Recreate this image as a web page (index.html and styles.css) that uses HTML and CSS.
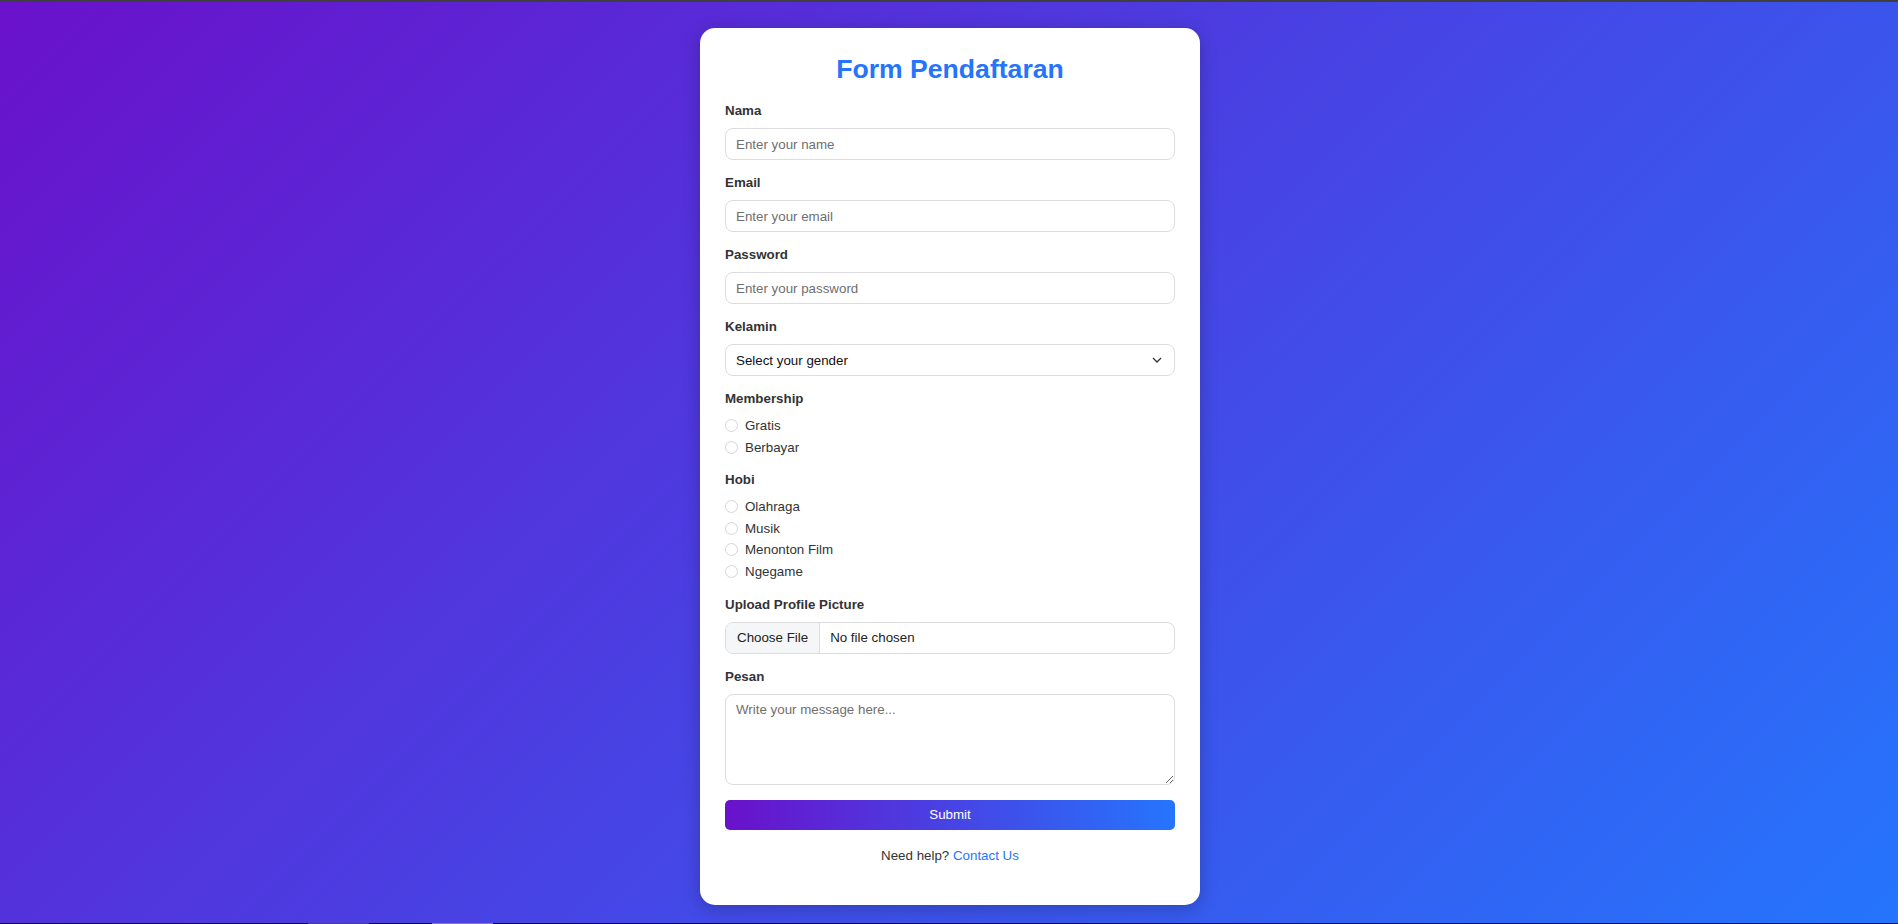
FILE: index.html
```html
<!DOCTYPE html>
<html lang="id">
<head>
<meta charset="utf-8">
<title>Form Pendaftaran</title>
<link rel="stylesheet" href="styles.css">
</head>
<body>
<div class="top-strip"></div>
<main class="page">
  <form class="card">
    <h2 class="title">Form Pendaftaran</h2>

    <div class="group">
      <label class="label" for="nama">Nama</label>
      <input class="field" id="nama" type="text" placeholder="Enter your name">
    </div>

    <div class="group">
      <label class="label" for="email">Email</label>
      <input class="field" id="email" type="email" placeholder="Enter your email">
    </div>

    <div class="group">
      <label class="label" for="password">Password</label>
      <input class="field" id="password" type="password" placeholder="Enter your password">
    </div>

    <div class="group">
      <label class="label" for="kelamin">Kelamin</label>
      <select class="field select" id="kelamin">
        <option>Select your gender</option>
        <option>Laki-laki</option>
        <option>Perempuan</option>
      </select>
    </div>

    <div class="group group-choices">
      <span class="label">Membership</span>
      <div class="choices">
        <label class="choice"><input class="radio" type="radio" name="membership"><span>Gratis</span></label>
        <label class="choice"><input class="radio" type="radio" name="membership"><span>Berbayar</span></label>
      </div>
    </div>

    <div class="group group-choices">
      <span class="label">Hobi</span>
      <div class="choices">
        <label class="choice"><input class="radio" type="checkbox"><span>Olahraga</span></label>
        <label class="choice"><input class="radio" type="checkbox"><span>Musik</span></label>
        <label class="choice"><input class="radio" type="checkbox"><span>Menonton Film</span></label>
        <label class="choice"><input class="radio" type="checkbox"><span>Ngegame</span></label>
      </div>
    </div>

    <div class="group">
      <span class="label">Upload Profile Picture</span>
      <label class="file-field">
        <span class="file-btn">Choose File</span>
        <span class="file-name">No file chosen</span>
        <input class="file-input" type="file">
      </label>
    </div>

    <div class="group">
      <label class="label" for="pesan">Pesan</label>
      <textarea class="field textarea" id="pesan" placeholder="Write your message here..."></textarea>
    </div>

    <button class="submit" type="button">Submit</button>

    <p class="help">Need help? <a class="help-link" href="#">Contact Us</a></p>
  </form>
</main>
<div class="bottom-strip">
  <span class="strip-seg strip-gap1"></span>
  <span class="strip-seg strip-gray"></span>
  <span class="strip-seg strip-gap2"></span>
  <span class="strip-seg strip-orange"></span>
</div>
</body>
</html>
```

FILE: styles.css
```css
* {
  box-sizing: border-box;
}

html, body {
  margin: 0;
  padding: 0;
  height: 924px;
  overflow: hidden;
}

body {
  font-family: "Liberation Sans", Arial, sans-serif;
  font-size: 13.333px;
  color: #333;
  display: flex;
  flex-direction: column;
}

.top-strip {
  height: 2px;
  background: #3f3f3f;
  flex: none;
}

.page {
  flex: 1;
  background: linear-gradient(135deg, #6a11cb 0%, #2575fc 100%);
  display: flex;
  justify-content: center;
  align-items: flex-start;
  padding-top: 26px;
  padding-left: 2px;
}

.card {
  width: 500px;
  background: #fff;
  border-radius: 15px;
  padding: 25px 25px 25px;
  box-shadow: 0 4px 18px rgba(0, 0, 0, 0.22);
}

.title {
  margin: 1px 0 19px;
  font-size: 26.6px;
  line-height: 30px;
  font-weight: bold;
  color: #2575fc;
  text-align: center;
}

.group {
  margin-bottom: 15px;
}

.group-choices {
  margin-bottom: 16.5px;
}

.label {
  display: block;
  font-weight: bold;
  font-size: 13.333px;
  line-height: 16px;
  margin-bottom: 9px;
  color: #333;
}

.field {
  display: block;
  width: 100%;
  height: 32px;
  border: 1px solid #dcdcdf;
  border-radius: 8px;
  padding: 0 10px;
  font-family: "Liberation Sans", Arial, sans-serif;
  font-size: 13.333px;
  color: #222;
  background: #fff;
  outline: none;
}

.field::placeholder {
  color: #6f6f6f;
}

.select {
  appearance: none;
  -webkit-appearance: none;
  color: #111;
  background-image: url("data:image/svg+xml;utf8,<svg xmlns='http://www.w3.org/2000/svg' width='10' height='6' viewBox='0 0 10 6'><path d='M1 1l4 4 4-4' fill='none' stroke='%23333' stroke-width='1.3'/></svg>");
  background-repeat: no-repeat;
  background-position: right 12px center;
  background-size: 10px 6px;
}

.choices {
  display: flex;
  flex-direction: column;
  gap: 5px;
  padding-top: 1px;
}

.choice {
  display: flex;
  align-items: center;
  height: 16.75px;
  font-size: 13.333px;
  color: #333;
}

.radio {
  appearance: none;
  -webkit-appearance: none;
  width: 13px;
  height: 13px;
  margin: 0 7px 0 0;
  border: 1px solid #d6d6d9;
  border-radius: 50%;
  background: #fff;
  flex: none;
}

.file-field {
  display: flex;
  align-items: stretch;
  height: 32px;
  border: 1px solid #dcdcdf;
  border-radius: 8px;
  overflow: hidden;
  color: #222;
}

.file-btn {
  display: flex;
  align-items: center;
  padding: 0 11px 0 11px;
  background: #f5f6f8;
  border-right: 1px solid #dcdcdf;
  color: #222;
}

.file-name {
  display: flex;
  align-items: center;
  padding-left: 10px;
}

.file-input {
  display: none;
}

.textarea {
  height: 91px;
  padding: 7px 10px;
  resize: vertical;
  line-height: normal;
}

.submit {
  display: block;
  width: 100%;
  height: 30px;
  border: none;
  border-radius: 5px;
  background: linear-gradient(to right, #6a11cb, #2575fc);
  color: #fff;
  font-family: "Liberation Sans", Arial, sans-serif;
  font-size: 13.333px;
}

.help {
  margin: 18px 0 16px;
  text-align: center;
  line-height: 16px;
  color: #333;
}

.help-link {
  color: #2575fc;
  text-decoration: none;
}

.bottom-strip {
  height: 1px;
  flex: none;
  background: #111;
  display: flex;
}

.strip-seg {
  height: 1px;
  flex: none;
}

.strip-gap1 {
  width: 308px;
}

.strip-gray {
  width: 61px;
  background: #4a4a4a;
}

.strip-gap2 {
  width: 63px;
}

.strip-orange {
  width: 61px;
  background: #b87850;
}
```
